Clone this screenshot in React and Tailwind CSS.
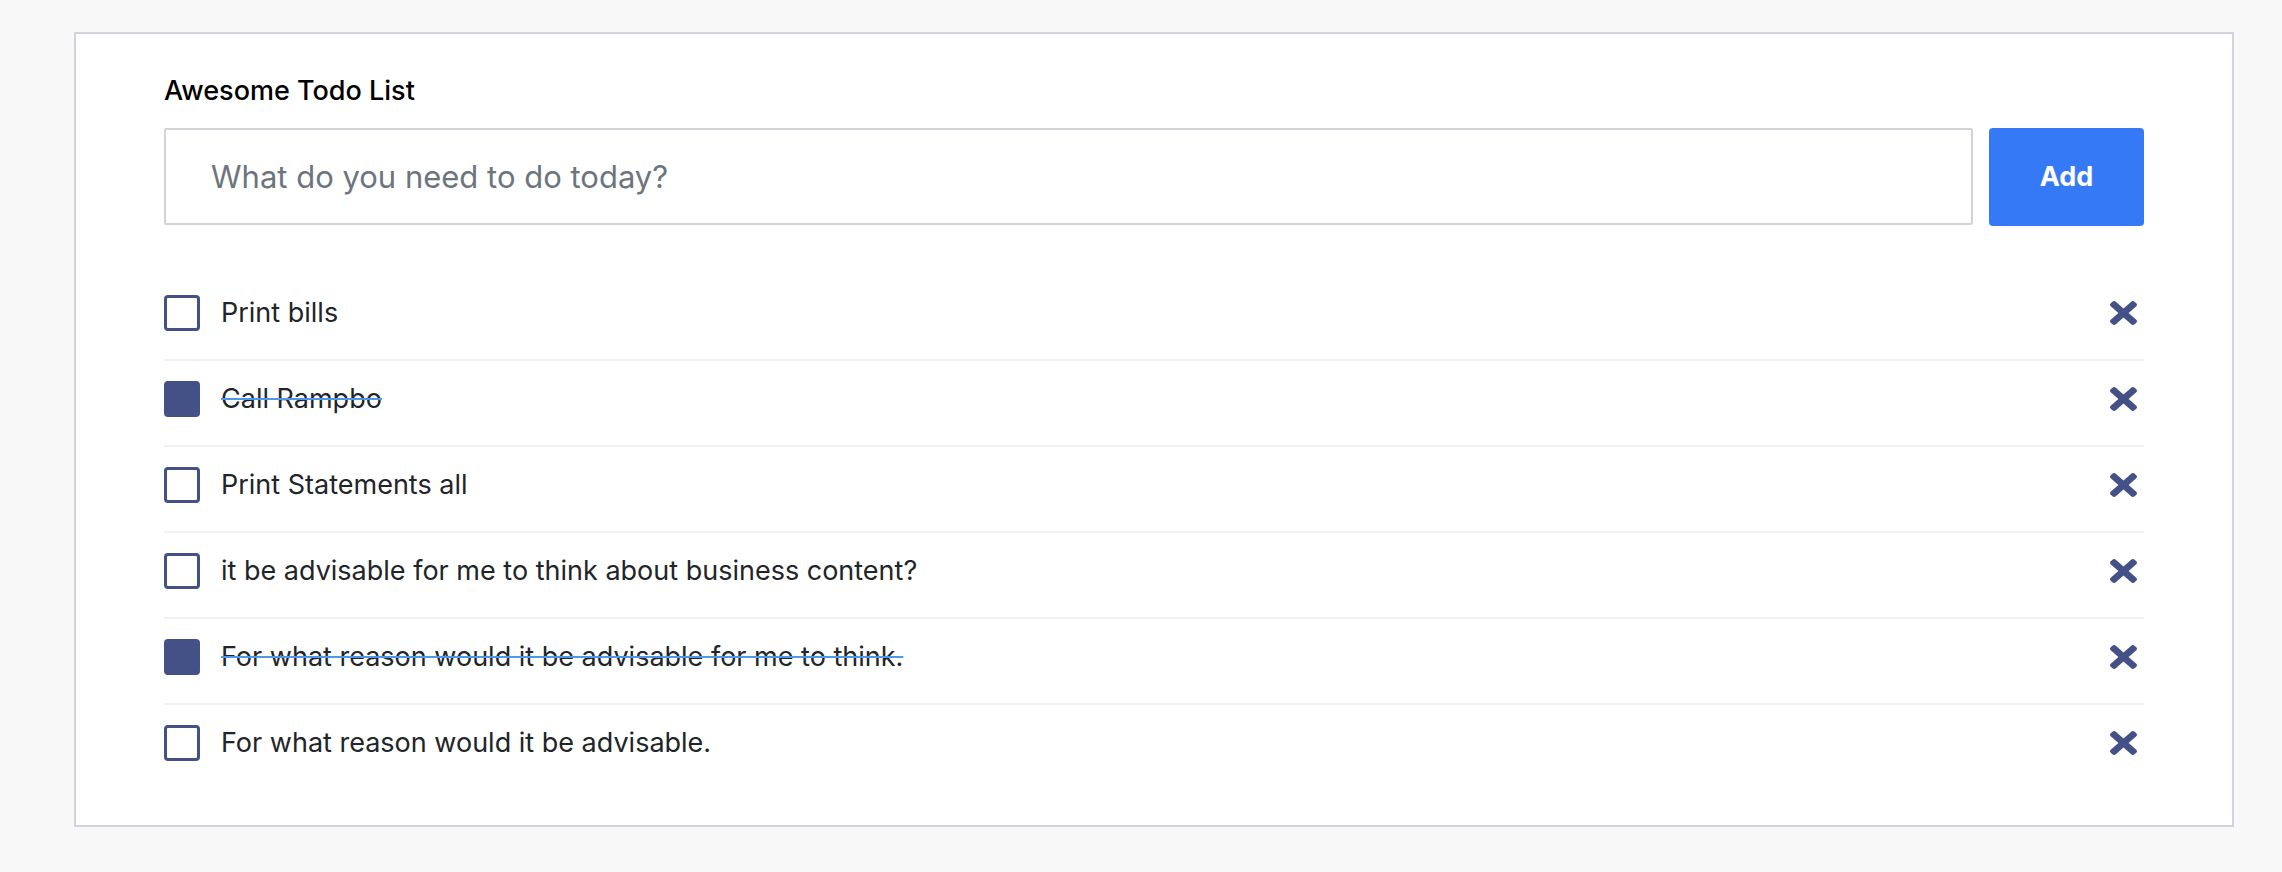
import { useState } from "react";

const initialTodos = [
  { id: 1, text: "Print bills", done: false },
  { id: 2, text: "Call Rampbo", done: true },
  { id: 3, text: "Print Statements all", done: false },
  { id: 4, text: "it be advisable for me to think about business content?", done: false },
  { id: 5, text: "For what reason would it be advisable for me to think.", done: true },
  { id: 6, text: "For what reason would it be advisable.", done: false },
];

const TimesIcon = () => (
  <svg width="27" height="24" viewBox="0 80 352 352" preserveAspectRatio="none" fill="#445187">
    <path d="M242.72 256l100.07-100.07c12.28-12.28 12.28-32.19 0-44.48l-22.24-22.24c-12.28-12.28-32.19-12.28-44.48 0L176 189.28 75.930 89.21c-12.28-12.28-32.19-12.28-44.48 0L9.21 111.45c-12.28 12.28-12.28 32.19 0 44.48L109.28 256 9.21 356.07c-12.28 12.28-12.28 32.19 0 44.48l22.24 22.24c12.28 12.28 32.2 12.28 44.48 0L176 322.72l100.07 100.07c12.28 12.28 32.2 12.28 44.48 0l22.24-22.24c12.28-12.28 12.28-32.19 0-44.48L242.72 256z" />
  </svg>
);

export default function App() {
  const [todos, setTodos] = useState(initialTodos);
  const [value, setValue] = useState("");

  const toggle = (id) =>
    setTodos(todos.map((t) => (t.id === id ? { ...t, done: !t.done } : t)));

  const remove = (id) => setTodos(todos.filter((t) => t.id !== id));

  const add = () => {
    if (!value.trim()) return;
    setTodos([...todos, { id: Date.now(), text: value, done: false }]);
    setValue("");
  };

  return (
    <div className="min-h-screen bg-[#f8f8f8] pt-[32px] font-['Inter',sans-serif]">
      <div className="ml-[74px] w-[2160px] border-2 border-[#d3d3de] bg-white px-[88px] pt-[39px] pb-[36px]">
        <h1 className="text-[27px] leading-[36px] font-medium text-black">Awesome Todo List</h1>

        {/* Input row */}
        <div className="mt-[19px] flex gap-[16px]">
          <input
            value={value}
            onChange={(e) => setValue(e.target.value)}
            placeholder="What do you need to do today?"
            className="h-[97px] flex-1 rounded-[2px] border-2 border-[#d0d4d8] px-[45px] text-[31px] text-[#212529] placeholder:text-[#6c757d] outline-none"
          />
          <button
            onClick={add}
            className="h-[98px] w-[155px] rounded-[4px] bg-[#3579f6] text-[27px] font-bold text-white"
          >
            Add
          </button>
        </div>

        {/* List */}
        <ul className="mt-[49px]">
          {todos.map((todo, i) => (
            <li
              key={todo.id}
              className={`flex items-center pt-[20px] pb-[28px] ${i < todos.length - 1 ? "border-b-2 border-[#f1f1f1]" : ""}`}
            >
              <button
                onClick={() => toggle(todo.id)}
                className={`h-[36px] w-[36px] shrink-0 rounded-[4px] border-[3px] border-[#445187] ${todo.done ? "bg-[#445187]" : "bg-white"}`}
              />
              <span
                className={`ml-[21px] flex-1 text-[27px] leading-[36px] text-[#212529] ${todo.done ? "line-through decoration-[#4f97ea] decoration-2" : ""}`}
              >
                {todo.text}
              </span>
              <button onClick={() => remove(todo.id)} className="mr-[7px]">
                <TimesIcon />
              </button>
            </li>
          ))}
        </ul>
      </div>
    </div>
  );
}
